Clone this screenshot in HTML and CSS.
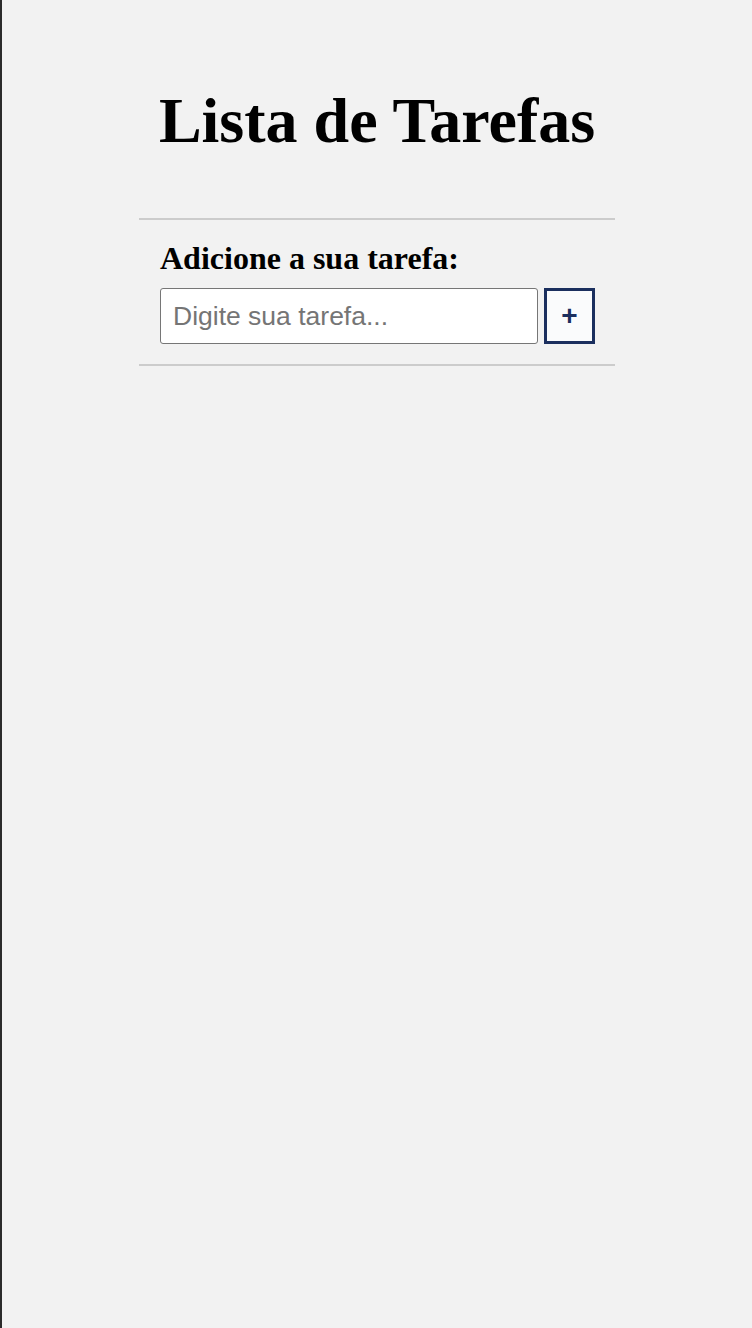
FILE: index.html
```html
<!DOCTYPE html>
<html lang="pt">
<head>
<meta charset="utf-8">
<title>Lista de Tarefas</title>
<link rel="stylesheet" href="styles.css">
</head>
<body>
<main class="app">
  <h1 class="title">Lista de Tarefas</h1>
  <section class="add">
    <label class="add-label" for="task">Adicione a sua tarefa:</label>
    <div class="add-row">
      <input id="task" class="add-input" type="text" placeholder="Digite sua tarefa...">
      <button class="add-btn" type="button">+</button>
    </div>
  </section>
</main>
</body>
</html>
```
FILE: styles.css
```css
html, body {
  margin: 0;
  padding: 0;
}
body {
  background: #f2f2f2;
  border-left: 2px solid #2b2b2b;
  min-height: 1328px;
  box-sizing: border-box;
  font-family: "Liberation Serif", "Times New Roman", serif;
  color: #000;
}
.app {
  width: 476px;
  margin: 0 auto;
  padding-top: 84px;
}
.title {
  margin: 0 0 60px;
  font-size: 64px;
  line-height: 74px;
  text-align: center;
  font-weight: bold;
}
.add {
  border-top: 2px solid #cccccc;
  border-bottom: 2px solid #cccccc;
  padding: 20px 19px 20px 21px;
}
.add-label {
  display: block;
  font-size: 32px;
  font-weight: bold;
  line-height: 37px;
  margin-bottom: 11px;
}
.add-row {
  display: flex;
  gap: 6px;
}
.add-input {
  flex: 0 0 378px;
  width: 378px;
  height: 56px;
  box-sizing: border-box;
  border: 1px solid #767676;
  border-radius: 3px;
  background: #fff;
  padding: 0 12px;
  font-family: "Liberation Sans", Arial, sans-serif;
  font-size: 26.5px;
}
.add-input::placeholder {
  color: #757575;
}
.add-btn {
  flex: 0 0 51px;
  width: 51px;
  height: 56px;
  box-sizing: border-box;
  border: 3px solid #1b2f5e;
  border-radius: 0;
  background: #fafbfc;
  color: #1b2f5e;
  font-family: "Liberation Sans", Arial, sans-serif;
  font-size: 28px;
  font-weight: bold;
  padding: 0;
  line-height: 1;
}
```
